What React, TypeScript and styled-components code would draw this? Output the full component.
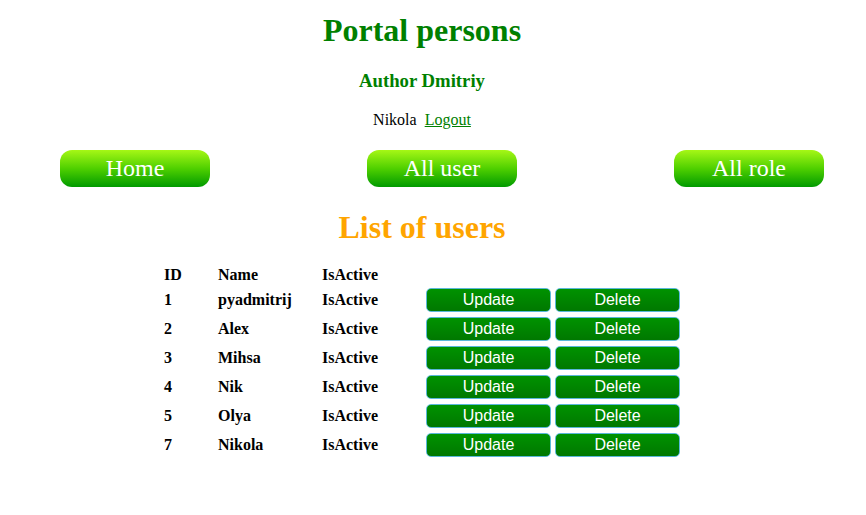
import { Fragment } from "react";
import styled, { createGlobalStyle } from "styled-components";

const GlobalStyle = createGlobalStyle`
  body {
    margin: 8px;
    background: #ffffff;
    font-family: "Liberation Serif", "Times New Roman", serif;
    color: #000000;
  }
`;

const Wrapper = styled.div`
  width: 828px;
  display: flex;
  flex-direction: column;
  align-items: center;
`;

const Title = styled.h1`
  margin: 0;
  font-size: 32px;
  line-height: 44px;
  font-weight: bold;
  color: #008000;
`;

const Author = styled.h3`
  margin: 17px 0 0;
  font-size: 18.72px;
  line-height: 24px;
  font-weight: bold;
  color: #008000;
`;

const UserLine = styled.div`
  margin-top: 17px;
  font-size: 16px;
  line-height: 20px;
  display: flex;
  gap: 8px;

  a {
    color: #008000;
    text-decoration: underline;
  }
`;

const Nav = styled.nav`
  align-self: stretch;
  margin-top: 20px;
  padding-left: 52px;
  display: flex;
  gap: 157px;
`;

const NavButton = styled.a`
  width: 150px;
  height: 37px;
  border-radius: 12px;
  background: linear-gradient(to bottom, #a6f716 0%, #4fd000 50%, #009a00 100%);
  color: #ffffff;
  font-size: 24px;
  line-height: 37px;
  text-align: center;
  text-decoration: none;
  cursor: pointer;
`;

const ListTitle = styled.h2`
  margin: 20px 0 0;
  font-size: 32px;
  line-height: 40px;
  font-weight: bold;
  color: #ffa500;
`;

const Table = styled.div`
  margin-top: 17px;
  display: grid;
  grid-template-columns: 54px 104px 104px 129px 125px;
  font-size: 16px;
  font-weight: bold;
`;

const HeadCell = styled.div`
  height: 21px;
  line-height: 21px;
`;

const Cell = styled.div`
  height: 29px;
  line-height: 29px;
`;

const ButtonCell = styled.div`
  height: 29px;
  display: flex;
  align-items: center;
`;

const ActionButton = styled.button`
  width: 125px;
  height: 24px;
  padding: 0;
  border: 1px solid #5ab8d8;
  border-radius: 5px;
  background: linear-gradient(to bottom, #009200, #007800);
  color: #ffffff;
  font-family: "Liberation Sans", Arial, sans-serif;
  font-size: 16px;
  line-height: 22px;
  cursor: pointer;
`;

const users = [
  { id: 1, name: "pyadmitrij" },
  { id: 2, name: "Alex" },
  { id: 3, name: "Mihsa" },
  { id: 4, name: "Nik" },
  { id: 5, name: "Olya" },
  { id: 7, name: "Nikola" },
];

function App() {
  return (
    <>
      <GlobalStyle />
      <Wrapper>
        <Title>Portal persons</Title>
        <Author>Author Dmitriy</Author>
        <UserLine>
          <span>Nikola</span>
          <a href="#">Logout</a>
        </UserLine>
        <Nav>
          <NavButton>Home</NavButton>
          <NavButton>All user</NavButton>
          <NavButton>All role</NavButton>
        </Nav>
        <ListTitle>List of users</ListTitle>
        <Table>
          <HeadCell>ID</HeadCell>
          <HeadCell>Name</HeadCell>
          <HeadCell>IsActive</HeadCell>
          <HeadCell />
          <HeadCell />
          {users.map((u) => (
            <Fragment key={u.id}>
              <Cell>{u.id}</Cell>
              <Cell>{u.name}</Cell>
              <Cell>IsActive</Cell>
              <ButtonCell>
                <ActionButton>Update</ActionButton>
              </ButtonCell>
              <ButtonCell>
                <ActionButton>Delete</ActionButton>
              </ButtonCell>
            </Fragment>
          ))}
        </Table>
      </Wrapper>
    </>
  );
}

export default App;
